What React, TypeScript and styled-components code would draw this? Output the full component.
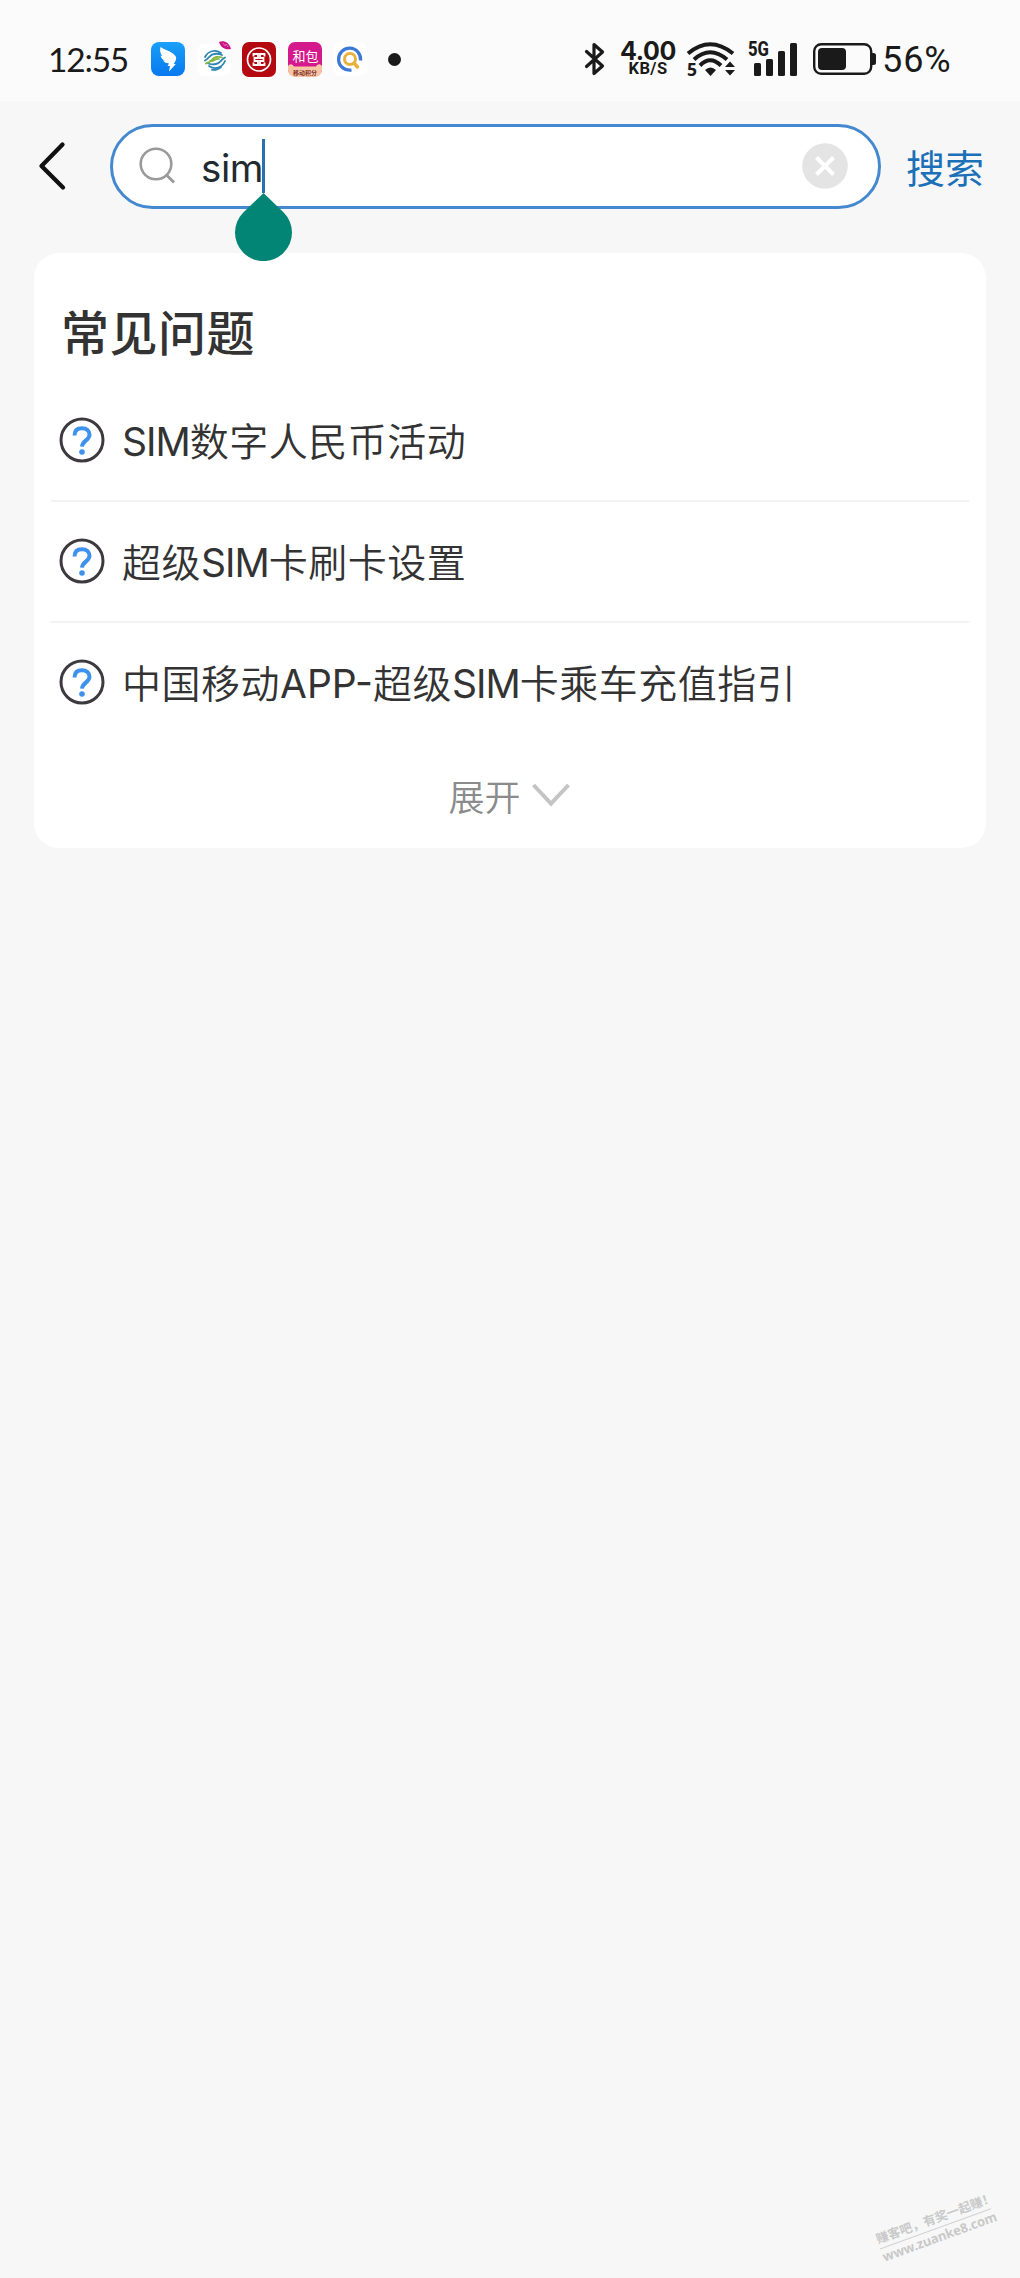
import React from 'react';
import styled, { createGlobalStyle } from 'styled-components';

const GlobalStyle = createGlobalStyle`
  * { box-sizing: border-box; }
  body { margin: 0; background: #f7f7f7; }
`;

const Page = styled.div`
  display: flex;
  flex-direction: column;
  width: 1020px;
  height: 2278px;
  overflow: hidden;
  background: #f7f7f7;
  color: #333;
  font-family: Inter, 'Noto Sans CJK SC', sans-serif;
`;

const StatusBar = styled.header`
  display: flex;
  align-items: center;
  height: 101px;
  padding: 17px 66px 0 48px;
  background: #fbfbfb;
  color: #1a1a1a;
`;

const Clock = styled.div`
  width: 103px;
  padding-bottom: 1px;
  font: 400 33.5px/40px Lato, sans-serif;
  letter-spacing: -1.2px;
  white-space: nowrap;
`;

const AppIcons = styled.div`
  display: flex;
  align-items: center;
  gap: 11.5px;
  flex: 1;
  svg { display: block; }
`;

const NotificationDot = styled.div`
  width: 13px;
  height: 13px;
  margin-left: 9px;
  border-radius: 50%;
  background: #1a1a1a;
`;

const SystemIcons = styled.div`
  display: flex;
  align-items: center;
  svg { display: block; overflow: visible; }
`;

const Percent = styled.div`
  width: 72px;
  margin-left: 5px;
  padding-top: 1px;
  font: 400 36px/40px Roboto, sans-serif;
  letter-spacing: 0.9px;
  white-space: nowrap;
`;

const SearchRow = styled.div`
  display: flex;
  align-items: center;
  height: 152px;
  padding: 0 34px 22px 38px;
`;

const BackButton = styled.button`
  width: 72px;
  height: 52px;
  padding: 0;
  border: 0;
  background: none;
  svg { display: block; }
`;

const SearchBox = styled.div`
  display: flex;
  align-items: center;
  width: 771px;
  height: 85px;
  padding: 0 30px 0 26px;
  border: 3px solid #4489cf;
  border-radius: 43px;
  background: #fff;
  svg { display: block; }
`;

const Query = styled.div`
  position: relative;
  display: flex;
  align-items: center;
  flex: 1;
  margin-left: 24px;
  color: #202a30;
  font-size: 38.5px;
  line-height: 54px;
`;

const QueryText = styled.span`
  width: 61px;
  padding-top: 3px;
  letter-spacing: -0.4px;
  font-weight: 400;
`;

const Caret = styled.span`
  width: 3px;
  height: 54px;
  background: #2c70ad;
`;

const CaretHandle = styled.svg`
  position: absolute;
  top: 55.5px;
  left: 34px;
`;

const SearchButton = styled.button`
  width: 80px;
  margin-left: 25px;
  padding: 0 0 1px;
  border: 0;
  background: none;
  color: #1b70b8;
  font: 400 39px/56px 'Noto Sans CJK SC', sans-serif;
  white-space: nowrap;
  text-align: left;
`;

const Card = styled.main`
  display: flex;
  flex-direction: column;
  width: 952px;
  height: 595px;
  margin-left: 34px;
  padding: 0 17px;
  border-radius: 25px;
  background: #fff;
`;

const CardTitle = styled.h1`
  height: 128px;
  margin: 0;
  padding: 42px 0 0 10px;
  font: 500 48px/70px 'Noto Sans CJK SC', sans-serif;
  letter-spacing: 0.5px;
`;

const Question = styled.div`
  display: flex;
  align-items: center;
  height: 121px;
  padding: 0 0 1px 8px;
  border-bottom: 2px solid #f3f3f3;
  svg { display: block; flex: none; }
  &:nth-of-type(3) { border-bottom-color: transparent; }
`;

const QuestionText = styled.div`
  display: flex;
  align-items: baseline;
  margin: 0 0 0 17px;
  line-height: 56px;
  white-space: nowrap;
`;

const Han = styled.span`
  font: 350 39px/56px 'Noto Sans CJK SC', sans-serif;
  letter-spacing: 0.5px;
`;

const Latin = styled.span<{ $loose: boolean }>`
  font: 400 39px/56px Inter, sans-serif;
  letter-spacing: ${(p) => (p.$loose ? '0px' : '-1px')};
`;

const Expand = styled.button`
  display: flex;
  align-items: center;
  justify-content: center;
  height: 102px;
  padding: 0 2px 0 0;
  border: 0;
  background: none;
  color: #8b8b8b;
  font: 350 36px/52px 'Noto Sans CJK SC', sans-serif;
  svg { display: block; margin-left: 11px; }
`;

const Spacer = styled.div`
  flex: 1;
`;

const Watermark = styled.footer`
  align-self: flex-end;
  width: 126px;
  margin: 0 18px 33px 0;
  color: #c9c9c9;
  transform: rotate(-20deg);
  white-space: nowrap;
`;

const WatermarkSlogan = styled.div`
  width: 118px;
  height: 19px;
  border-bottom: 1px solid #d2d2d2;
  font: 700 12.5px/16px 'Noto Sans CJK SC', sans-serif;
`;

const WatermarkUrl = styled.div`
  font: 700 13px/17px 'Noto Sans', sans-serif;
  letter-spacing: -0.1px;
`;

const BirdAppIcon = () => (
  <svg width="34" height="34" viewBox="0 0 34 34">
    <defs>
      <linearGradient id="sky" x1="0" y1="0" x2="0" y2="1">
        <stop offset="0" stopColor="#19a0f8" />
        <stop offset="1" stopColor="#0878ef" />
      </linearGradient>
    </defs>
    <rect width="34" height="34" rx="8" fill="url(#sky)" />
    <path d="M9.500 5c4.500 3 9.500 4 13 7 2.500 2 3 3.500 2.500 5.500-.5 2-1.600 3-2.200 4.500h2L18 29.500l1-5.500h-2.500l1.500-2.500c-3-.5-5-1.500-6-3l2 .2c-2.700-1.300-4-3-4.500-5.200l2 .8C9.500 12 8.500 9 9.500 5z" fill="#fff" />
  </svg>
);

const KnotAppIcon = () => (
  <svg width="34" height="38" viewBox="0 0 34 38">
    <rect y="4" width="34" height="32" rx="8" fill="#fff" />
    <g fill="none" strokeLinecap="round" strokeWidth="1.800">
      <path d="M8 17c3-6 10-8 16-4M8 20.500c4-2 5-6 9-6.500 3-.5 5-.5 8 1" stroke="#2d86b5" />
      <path d="M28 21c-3 7-10 9-16 5M28 17.500c-4 2-5 6-9 6.500-3 .500-6 .500-9-1" stroke="#2d86b5" />
      <path d="M9 23.500c6-1 6-6 10-6.500 2-.3 4-.2 6 .5M13 21c4 1 5-3 9-2" stroke="#83b944" />
      <path d="M15 29.800c4 .3 7-.8 9-2.800" stroke="#2d86b5" />
    </g>
    <path d="M22 2c4-2 10-.5 12 7-6 1-10-1-12-7z" fill="#c91486" />
    <path d="M26 3l2 3 1-2 2 3" stroke="#e978bd" fill="none" strokeWidth=".8" />
  </svg>
);

const BankAppIcon = () => (
  <svg width="34" height="35" viewBox="0 0 34 35">
    <rect width="34" height="35" rx="7" fill="#b40910" />
    <circle cx="17" cy="17.500" r="11.500" fill="none" stroke="#fff" strokeWidth="1.700" />
    <path d="M11.500 14.500V12H16v4h-3.500v3H16v4h-4.500v-2.500M22.500 14.500V12H18v4h3.500v3H18v4h4.500v-2.500" fill="none" stroke="#fff" strokeWidth="1.800" />
  </svg>
);

const WalletAppIcon = () => (
  <svg width="34" height="35" viewBox="0 0 34 35">
    <rect width="34" height="34" rx="7" fill="#d4198c" />
    <text x="17.500" y="18.500" textAnchor="middle" fill="#fff" fontFamily="Noto Sans CJK SC, sans-serif" fontSize="13">和包</text>
    <path d="M0 24c2-3 5-2 6 .5h22c1-2.500 4-3.500 6-.5v3c0 5-3 8-8 8H8c-5 0-8-3-8-8z" fill="#f8c5a4" />
    <text x="17" y="32.500" textAnchor="middle" fill="#85352b" fontFamily="Noto Sans CJK SC, sans-serif" fontWeight="700" fontSize="6">移动积分</text>
  </svg>
);

const FinderAppIcon = () => (
  <svg width="34" height="34" viewBox="0 0 34 34">
    <rect width="34" height="34" rx="8" fill="#fff" />
    <path d="M18.500 28A11 11 0 1 1 27.500 18.500" fill="none" stroke="#3d78d4" strokeWidth="3.300" />
    <circle cx="17" cy="17" r="5.500" fill="none" stroke="#e9b23e" strokeWidth="3" />
    <path d="M21 21l3.500 4" stroke="#e9b23e" strokeWidth="3.500" strokeLinecap="round" />
  </svg>
);

const BluetoothIcon = () => (
  <svg width="20" height="34" viewBox="0 0 20 34">
    <path d="M1.500 9.500l16 14.500-8.500 7.500v-29L17.500 10 1.500 24.500" fill="none" stroke="#1a1a1a" strokeWidth="3.200" strokeLinejoin="round" strokeLinecap="round" />
  </svg>
);

const NetworkSpeed = styled.div`
  display: flex;
  flex-direction: column;
  align-items: center;
  width: 56px;
  margin-left: 15px;
`;

const SpeedValue = styled.span`
  font: 700 25px/20px Inter, sans-serif;
  letter-spacing: -0.3px;
`;

const SpeedUnit = styled.span`
  font: 700 16.5px/16px Roboto, sans-serif;
  letter-spacing: 0.4px;
`;

const WifiIcon = styled.svg`
  margin-left: 11px;
`;

const SignalIcon = styled.svg`
  margin-left: 13px;
`;

const BatteryIcon = styled.svg`
  margin-left: 16px;
`;

const HelpIcon = () => (
  <svg width="46" height="46" viewBox="0 0 46 46">
    <circle cx="23" cy="23" r="21" fill="#fff" stroke="#3d3a3f" strokeWidth="3" />
    <path d="M15.500 18.500c0-5 3-7.300 7.500-7.300s7.500 2.500 7.500 6.500c0 5.500-7 5.800-7.500 12" fill="none" stroke="#3e91ec" strokeWidth="4" />
    <circle cx="23" cy="35" r="2.800" fill="#3e91ec" />
  </svg>
);

const MixedText = ({ text }: { text: string }) => (
  <QuestionText>
    {text.split(/([A-Z-]+)/).filter(Boolean).map((part, i) =>
      /^[A-Z-]+$/.test(part) ? (
        <Latin key={i} $loose={part.endsWith('-')}>{part}</Latin>
      ) : (
        <Han key={i}>{part}</Han>
      )
    )}
  </QuestionText>
);

const questions = ['SIM数字人民币活动', '超级SIM卡刷卡设置', '中国移动APP-超级SIM卡乘车充值指引'];

export default function App() {
  return (
    <Page>
      <GlobalStyle />
      <StatusBar>
        <Clock>12:55</Clock>
        <AppIcons>
          <BirdAppIcon />
          <KnotAppIcon />
          <BankAppIcon />
          <WalletAppIcon />
          <FinderAppIcon />
          <NotificationDot />
        </AppIcons>
        <SystemIcons>
          <BluetoothIcon />
          <NetworkSpeed>
            <SpeedValue>4.00</SpeedValue>
            <SpeedUnit>KB/S</SpeedUnit>
          </NetworkSpeed>
          <WifiIcon width="48" height="36" viewBox="0 0 48 36">
            <g fill="none" stroke="#1a1a1a" strokeWidth="4">
              <path d="M1 12.500Q23-6 46 12.500" />
              <path d="M7 18.500Q23 4 40 18.500" />
              <path d="M13 24.500Q23 14 34 24.500" />
            </g>
            <path d="M18 29q5.500-5 11 0l-5.500 6z" fill="#1a1a1a" />
            <path d="M38 26l5-5.500 5 5.500zM38 29l5 5.500 5-5.500z" fill="#1a1a1a" />
            <text x="0" y="35" fontFamily="Noto Sans, sans-serif" fontWeight="700" fontSize="17.500" fill="#1a1a1a">5</text>
          </WifiIcon>
          <SignalIcon width="49" height="36" viewBox="0 0 49 36">
            <text x="0" y="15" textLength="21" lengthAdjust="spacingAndGlyphs" fontFamily="Roboto, sans-serif" fontWeight="800" fontSize="20" fill="#1a1a1a">5G</text>
            <g fill="#1a1a1a">
              <rect x="6" y="22" width="7" height="13" rx="1.500" />
              <rect x="18" y="18" width="7" height="17" rx="1.500" />
              <rect x="30" y="10" width="7" height="25" rx="1.500" />
              <rect x="42" y="2" width="7" height="33" rx="1.500" />
            </g>
          </SignalIcon>
          <BatteryIcon width="64" height="32" viewBox="0 0 64 32">
            <rect x="1.200" y="1.200" width="57" height="29.600" rx="7" fill="none" stroke="#1a1a1a" strokeWidth="2.400" />
            <rect x="5" y="5" width="28" height="22" rx="4" fill="#1a1a1a" />
            <path d="M59 10h1.500q2.500 0 2.500 2.500v7q0 2.500-2.500 2.500H59z" fill="#1a1a1a" />
          </BatteryIcon>
          <Percent>56%</Percent>
        </SystemIcons>
      </StatusBar>
      <SearchRow>
        <BackButton aria-label="返回">
          <svg width="30" height="52" viewBox="0 0 30 52">
            <path d="M24.500 4.500L3.500 26l21.500 21.500" fill="none" stroke="#111" strokeWidth="4.300" strokeLinecap="round" strokeLinejoin="round" />
          </svg>
        </BackButton>
        <SearchBox>
          <svg width="38" height="38" viewBox="0 0 38 38">
            <circle cx="17" cy="17" r="15.300" fill="none" stroke="#9a9a9a" strokeWidth="2.600" />
            <path d="M27.500 28l7.500 7.500" stroke="#9a9a9a" strokeWidth="2.800" />
          </svg>
          <Query>
            <QueryText>sim</QueryText>
            <Caret />
            <CaretHandle width="57" height="68" viewBox="0 0 57 68">
              <path d="M28.500 0L48.700 19.500A28.500 28.500 0 1 1 8.300 19.500z" fill="#038576" />
            </CaretHandle>
          </Query>
          <svg width="46" height="46" viewBox="0 0 46 46">
            <circle cx="23" cy="23" r="22.800" fill="#e4e4e4" />
            <path d="M14.500 14.500l17 17M31.500 14.500l-17 17" stroke="#fff" strokeWidth="4" />
          </svg>
        </SearchBox>
        <SearchButton>搜索</SearchButton>
      </SearchRow>
      <Card>
        <CardTitle>常见问题</CardTitle>
        {questions.map((text) => (
          <Question key={text}>
            <HelpIcon />
            <MixedText text={text} />
          </Question>
        ))}
        <Expand>
          展开
          <svg width="38" height="25" viewBox="0 0 38 25">
            <path d="M1.500 2L19 20.500 36.500 2" fill="none" stroke="#c4c4c4" strokeWidth="4" />
          </svg>
        </Expand>
      </Card>
      <Spacer />
      <Watermark>
        <WatermarkSlogan>赚客吧，有奖一起赚！</WatermarkSlogan>
        <WatermarkUrl>www.zuanke8.com</WatermarkUrl>
      </Watermark>
    </Page>
  );
}
